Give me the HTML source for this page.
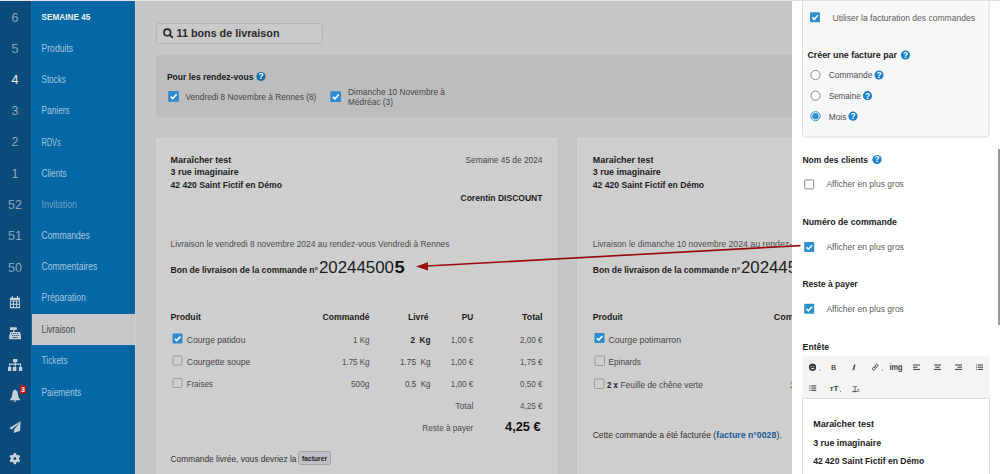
<!DOCTYPE html>
<html><head><meta charset="utf-8"><style>
html,body{margin:0;padding:0;width:1000px;height:474px;overflow:hidden;background:#c6c6c6}
svg{display:block;font-family:"Liberation Sans",sans-serif}
</style></head><body>
<svg width="1000" height="474" viewBox="0 0 1000 474">
<rect x="0" y="0" width="1000" height="474" fill="#c6c6c6" />
<rect x="0" y="0" width="31" height="474" fill="#0a4b7b" />
<rect x="31" y="0" width="104" height="474" fill="#0568a6" />
<rect x="129.5" y="0" width="5.5" height="474" fill="#0563a0" />
<rect x="31" y="314" width="104" height="31" fill="#c8c8c8" />
<rect x="135" y="0" width="1" height="474" fill="#cfcfcf" />
<rect x="31" y="0" width="1" height="474" fill="#0f6eaa" />
<rect x="0" y="0" width="792" height="1" fill="#e6e6e6" />
<text x="15.0" y="21.5" font-size="12.5" fill="#aebdcc" text-anchor="middle"  stroke="#0a4b7b" stroke-width="0.2">6</text>
<text x="15.0" y="52.5" font-size="12.5" fill="#aebdcc" text-anchor="middle"  stroke="#0a4b7b" stroke-width="0.2">5</text>
<text x="15.0" y="84" font-size="12.5" fill="#f4f6f8" text-anchor="middle" >4</text>
<text x="15.0" y="115" font-size="12.5" fill="#aebdcc" text-anchor="middle"  stroke="#0a4b7b" stroke-width="0.2">3</text>
<text x="15.0" y="146" font-size="12.5" fill="#aebdcc" text-anchor="middle"  stroke="#0a4b7b" stroke-width="0.2">2</text>
<text x="15.0" y="177.5" font-size="12.5" fill="#aebdcc" text-anchor="middle"  stroke="#0a4b7b" stroke-width="0.2">1</text>
<text x="15.0" y="209.2" font-size="12.5" fill="#aebdcc" text-anchor="middle"  stroke="#0a4b7b" stroke-width="0.2">52</text>
<text x="15.0" y="240.2" font-size="12.5" fill="#aebdcc" text-anchor="middle"  stroke="#0a4b7b" stroke-width="0.2">51</text>
<text x="15.0" y="271.5" font-size="12.5" fill="#aebdcc" text-anchor="middle"  stroke="#0a4b7b" stroke-width="0.2">50</text>
<text x="41.5" y="20.3" font-size="9" fill="#f0f0f0" font-weight="bold" textLength="48.8" lengthAdjust="spacingAndGlyphs" >SEMAINE 45</text>
<text x="41.5" y="52" font-size="10" fill="#a9c3dc" textLength="31.6" lengthAdjust="spacingAndGlyphs" >Produits</text>
<text x="41.5" y="82.9" font-size="10" fill="#a9c3dc" textLength="24.2" lengthAdjust="spacingAndGlyphs" >Stocks</text>
<text x="41.5" y="113.9" font-size="10" fill="#a9c3dc" textLength="28.2" lengthAdjust="spacingAndGlyphs" >Paniers</text>
<text x="41.5" y="145.6" font-size="10" fill="#a9c3dc" textLength="19.2" lengthAdjust="spacingAndGlyphs" >RDVs</text>
<text x="41.5" y="176.9" font-size="10" fill="#a9c3dc" textLength="25.2" lengthAdjust="spacingAndGlyphs" >Clients</text>
<text x="41.5" y="207.8" font-size="10" fill="#6f9cc4" textLength="35.5" lengthAdjust="spacingAndGlyphs" >Invitation</text>
<text x="41.5" y="239" font-size="10" fill="#a9c3dc" textLength="48.2" lengthAdjust="spacingAndGlyphs" >Commandes</text>
<text x="41.5" y="270.4" font-size="10" fill="#a9c3dc" textLength="55.7" lengthAdjust="spacingAndGlyphs" >Commentaires</text>
<text x="41.5" y="301.3" font-size="10" fill="#a9c3dc" textLength="44.2" lengthAdjust="spacingAndGlyphs" >Préparation</text>
<text x="41.5" y="333" font-size="10" fill="#3c4a55" textLength="33.7" lengthAdjust="spacingAndGlyphs" >Livraison</text>
<text x="41.5" y="364.2" font-size="10" fill="#a9c3dc" textLength="26.1" lengthAdjust="spacingAndGlyphs" >Tickets</text>
<text x="41.5" y="395.6" font-size="10" fill="#a9c3dc" textLength="39.7" lengthAdjust="spacingAndGlyphs" >Paiements</text>
<rect x="156.5" y="23.5" width="166" height="19.8" rx="2" fill="#c9c9c9" stroke="#b4b4b4"/>
<g fill="none" stroke="#222" stroke-width="1.6"><circle cx="167.3" cy="32.4" r="3.3"/><path d="M169.8 34.9 L172.8 37.9"/></g>
<text x="176.5" y="37.4" font-size="10.2" fill="#2a2a2a" font-weight="bold" textLength="103" lengthAdjust="spacingAndGlyphs" >11 bons de livraison</text>
<rect x="156" y="55" width="636" height="62" fill="#bdbdbd" />
<text x="166.9" y="79.5" font-size="9" fill="#1a1a1a" font-weight="bold" textLength="86.5" lengthAdjust="spacingAndGlyphs" >Pour les rendez-vous</text>
<circle cx="261" cy="76.5" r="4.6" fill="#1f6fa8"/><text x="261" y="79.4" font-size="8.28" font-weight="bold" fill="#fff" text-anchor="middle">?</text>
<rect x="168.2" y="91" width="10.7" height="10.7" rx="1" fill="#2f8ace"/>
<path d="M170.661 96.564 L172.694 98.597 L176.653 94.317" fill="none" stroke="#fff" stroke-width="1.6049999999999998"/>
<text x="185.4" y="100.3" font-size="9" fill="#474747" textLength="131" lengthAdjust="spacingAndGlyphs" >Vendredi 8 Novembre à Rennes (8)</text>
<rect x="330.3" y="91.2" width="10.7" height="10.7" rx="1" fill="#2f8ace"/>
<path d="M332.761 96.764 L334.794 98.797 L338.753 94.517" fill="none" stroke="#fff" stroke-width="1.6049999999999998"/>
<text x="348" y="95" font-size="9" fill="#474747" textLength="97" lengthAdjust="spacingAndGlyphs" >Dimanche 10 Novembre à</text>
<text x="348" y="105.3" font-size="9" fill="#474747" textLength="45" lengthAdjust="spacingAndGlyphs" >Médréac (3)</text>
<defs><filter id="sh" x="-5%" y="-5%" width="110%" height="110%"><feGaussianBlur stdDeviation="1.2"/></filter></defs>
<rect x="155.5" y="137.5" width="402" height="340" fill="#b8b8b8" filter="url(#sh)"/>
<rect x="156" y="138" width="401" height="340" fill="#cecece" stroke="#d2d2d2" stroke-width="1"/>
<rect x="577" y="137.5" width="300" height="340" fill="#b8b8b8" filter="url(#sh)"/>
<rect x="577.5" y="138" width="300" height="340" fill="#cecece" stroke="#d2d2d2" stroke-width="1"/>
<text x="170.6" y="163" font-size="9" fill="#1c1c1c" font-weight="bold" textLength="60.6" lengthAdjust="spacingAndGlyphs" >Maraîcher test</text>
<text x="170.6" y="175.3" font-size="9" fill="#1c1c1c" font-weight="bold" textLength="68" lengthAdjust="spacingAndGlyphs" >3 rue imaginaire</text>
<text x="170.6" y="187.8" font-size="9" fill="#1c1c1c" font-weight="bold" textLength="111.3" lengthAdjust="spacingAndGlyphs" >42 420 Saint Fictif en Démo</text>
<text x="592.8" y="163" font-size="9" fill="#1c1c1c" font-weight="bold" textLength="60.6" lengthAdjust="spacingAndGlyphs" >Maraîcher test</text>
<text x="592.8" y="175.3" font-size="9" fill="#1c1c1c" font-weight="bold" textLength="68" lengthAdjust="spacingAndGlyphs" >3 rue imaginaire</text>
<text x="592.8" y="187.8" font-size="9" fill="#1c1c1c" font-weight="bold" textLength="111.3" lengthAdjust="spacingAndGlyphs" >42 420 Saint Fictif en Démo</text>
<text x="542.5" y="163" font-size="9" fill="#474747" text-anchor="end" textLength="77" lengthAdjust="spacingAndGlyphs" >Semaine 45 de 2024</text>
<text x="542.5" y="200.5" font-size="9" fill="#1c1c1c" text-anchor="end" font-weight="bold" textLength="82" lengthAdjust="spacingAndGlyphs" >Corentin DISCOUNT</text>
<text x="170.5" y="246.8" font-size="9" fill="#4d4d4d" textLength="279" lengthAdjust="spacingAndGlyphs" >Livraison le vendredi 8 novembre 2024 au rendez-vous Vendredi à Rennes</text>
<text x="170.5" y="273" font-size="9" fill="#1c1c1c" font-weight="bold" textLength="147.5" lengthAdjust="spacingAndGlyphs" >Bon de livraison de la commande n°</text>
<text x="319" y="273" font-size="17" fill="#1c1c1c" textLength="75" lengthAdjust="spacingAndGlyphs" >20244500</text>
<text x="394.5" y="273" font-size="17" fill="#111" font-weight="bold" textLength="10.2" lengthAdjust="spacingAndGlyphs" >5</text>
<text x="592.7" y="246.8" font-size="9" fill="#4d4d4d" textLength="133.5" lengthAdjust="spacingAndGlyphs" >Livraison le dimanche 10 novembre</text>
<text x="728.5" y="246.8" font-size="9" fill="#4d4d4d" textLength="82" lengthAdjust="spacingAndGlyphs" >2024 au rendez-vous</text>
<text x="592.7" y="273" font-size="9" fill="#1c1c1c" font-weight="bold" textLength="147.5" lengthAdjust="spacingAndGlyphs" >Bon de livraison de la commande n°</text>
<text x="741" y="273" font-size="17" fill="#1c1c1c" textLength="56" lengthAdjust="spacingAndGlyphs" >202445</text>
<text x="170.5" y="320" font-size="9" fill="#1c1c1c" font-weight="bold" textLength="30.5" lengthAdjust="spacingAndGlyphs" >Produit</text>
<text x="369.5" y="320" font-size="9" fill="#1c1c1c" text-anchor="end" font-weight="bold" textLength="47" lengthAdjust="spacingAndGlyphs" >Commandé</text>
<text x="428.5" y="320" font-size="9" fill="#1c1c1c" text-anchor="end" font-weight="bold" textLength="20.5" lengthAdjust="spacingAndGlyphs" >Livré</text>
<text x="473.3" y="320" font-size="9" fill="#1c1c1c" text-anchor="end" font-weight="bold" textLength="11.5" lengthAdjust="spacingAndGlyphs" >PU</text>
<text x="542.5" y="320" font-size="9" fill="#1c1c1c" text-anchor="end" font-weight="bold" textLength="20.5" lengthAdjust="spacingAndGlyphs" >Total</text>
<rect x="172.5" y="333.5" width="10" height="10" rx="1" fill="#2f8ace"/>
<path d="M174.8 338.7 L176.7 340.6 L180.4 336.6" fill="none" stroke="#fff" stroke-width="1.5"/>
<text x="186.8" y="342.8" font-size="9" fill="#474747" textLength="58.6" lengthAdjust="spacingAndGlyphs" >Courge patidou</text>
<text x="369.5" y="342.8" font-size="9" fill="#4d4d4d" text-anchor="end" textLength="16.5" lengthAdjust="spacingAndGlyphs" >1 Kg</text>
<text x="430.5" y="342.8" font-size="9" fill="#1c1c1c" text-anchor="end" font-weight="bold" textLength="20" lengthAdjust="spacingAndGlyphs" xml:space="preserve">2  Kg</text>
<text x="473.3" y="342.8" font-size="9" fill="#4d4d4d" text-anchor="end" textLength="22.5" lengthAdjust="spacingAndGlyphs" >1,00 €</text>
<text x="542.5" y="342.8" font-size="9" fill="#4d4d4d" text-anchor="end" textLength="22.5" lengthAdjust="spacingAndGlyphs" >2,00 €</text>
<rect x="173.0" y="356.0" width="9" height="9" rx="1" fill="none" stroke="#9c9c9c"/>
<text x="186.8" y="364.8" font-size="9" fill="#474747" textLength="63.5" lengthAdjust="spacingAndGlyphs" >Courgette soupe</text>
<text x="369.5" y="364.8" font-size="9" fill="#4d4d4d" text-anchor="end" textLength="27.5" lengthAdjust="spacingAndGlyphs" >1.75 Kg</text>
<text x="430.5" y="364.8" font-size="9" fill="#444" text-anchor="end" textLength="30.5" lengthAdjust="spacingAndGlyphs" xml:space="preserve">1.75  Kg</text>
<text x="473.3" y="364.8" font-size="9" fill="#4d4d4d" text-anchor="end" textLength="22.5" lengthAdjust="spacingAndGlyphs" >1,00 €</text>
<text x="542.5" y="364.8" font-size="9" fill="#4d4d4d" text-anchor="end" textLength="22.5" lengthAdjust="spacingAndGlyphs" >1,75 €</text>
<rect x="173.0" y="378.5" width="9" height="9" rx="1" fill="none" stroke="#9c9c9c"/>
<text x="186.8" y="387.3" font-size="9" fill="#474747" textLength="26" lengthAdjust="spacingAndGlyphs" >Fraises</text>
<text x="369.5" y="387.3" font-size="9" fill="#4d4d4d" text-anchor="end" textLength="18.5" lengthAdjust="spacingAndGlyphs" >500g</text>
<text x="430.5" y="387.3" font-size="9" fill="#444" text-anchor="end" textLength="25.5" lengthAdjust="spacingAndGlyphs" xml:space="preserve">0.5  Kg</text>
<text x="473.3" y="387.3" font-size="9" fill="#4d4d4d" text-anchor="end" textLength="22.5" lengthAdjust="spacingAndGlyphs" >1,00 €</text>
<text x="542.5" y="387.3" font-size="9" fill="#4d4d4d" text-anchor="end" textLength="22.5" lengthAdjust="spacingAndGlyphs" >0,50 €</text>
<text x="473.3" y="409" font-size="9" fill="#4d4d4d" text-anchor="end" textLength="18" lengthAdjust="spacingAndGlyphs" >Total</text>
<text x="542.5" y="409" font-size="9" fill="#4d4d4d" text-anchor="end" textLength="22.5" lengthAdjust="spacingAndGlyphs" >4,25 €</text>
<text x="473.3" y="430.7" font-size="9" fill="#4d4d4d" text-anchor="end" textLength="51" lengthAdjust="spacingAndGlyphs" >Reste à payer</text>
<text x="540.7" y="431.2" font-size="13" fill="#111" text-anchor="end" font-weight="bold" textLength="35.7" lengthAdjust="spacingAndGlyphs" >4,25 €</text>
<text x="170.5" y="461.5" font-size="9" fill="#333" textLength="126" lengthAdjust="spacingAndGlyphs" >Commande livrée, vous devriez la</text>
<rect x="298.5" y="451.5" width="32" height="13" rx="2" fill="#c0bfc6" stroke="#a2a2a8"/>
<text x="314.5" y="461" font-size="7" fill="#222" text-anchor="middle" font-weight="bold" textLength="25" lengthAdjust="spacingAndGlyphs" >facturer</text>
<text x="592.7" y="319.6" font-size="9" fill="#1c1c1c" font-weight="bold" textLength="30" lengthAdjust="spacingAndGlyphs" >Produit</text>
<text x="773.7" y="319.6" font-size="9" fill="#1c1c1c" font-weight="bold" >Commandé</text>
<rect x="594.5" y="333" width="10" height="10" rx="1" fill="#2f8ace"/>
<path d="M596.8 338.2 L598.7 340.1 L602.4 336.1" fill="none" stroke="#fff" stroke-width="1.5"/>
<text x="608.5" y="342.7" font-size="9" fill="#474747" textLength="72.5" lengthAdjust="spacingAndGlyphs" >Courge potimarron</text>
<rect x="595.0" y="356.0" width="9.5" height="9.5" rx="1" fill="none" stroke="#9c9c9c"/>
<text x="608.5" y="365" font-size="9" fill="#474747" textLength="32.5" lengthAdjust="spacingAndGlyphs" >Epinards</text>
<rect x="594.5" y="379.0" width="9.5" height="9.5" rx="1" fill="none" stroke="#9c9c9c"/>
<text x="607" y="387.5" font-size="9" fill="#1c1c1c" font-weight="bold" textLength="11" lengthAdjust="spacingAndGlyphs" >2 x</text>
<text x="620.5" y="387.5" font-size="9" fill="#474747" textLength="82.3" lengthAdjust="spacingAndGlyphs" >Feuille de chêne verte</text>
<text x="789.8" y="387.5" font-size="9" fill="#4d4d4d" >1</text>
<text x="592.7" y="437.6" font-size="9" fill="#333" textLength="123.3" lengthAdjust="spacingAndGlyphs" >Cette commande a été facturée (</text>
<text x="716.3" y="437.6" font-size="9" fill="#175a94" font-weight="bold" textLength="60" lengthAdjust="spacingAndGlyphs" >facture n°0028</text>
<text x="776.6" y="437.6" font-size="9" fill="#333" >).</text>
<rect x="792" y="0" width="208" height="474" fill="#ffffff" />
<rect x="792" y="0" width="208" height="1" fill="#e0e0e0" />
<rect x="802.5" y="-10" width="186.5" height="147" rx="3" fill="#f8f8f8" stroke="#dcdcdc"/>
<rect x="792" y="0" width="208" height="1" fill="#e0e0e0" />
<rect x="810" y="12.2" width="10" height="10" rx="1" fill="#2d90d2"/>
<path d="M812.3 17.4 L814.2 19.299999999999997 L817.9 15.299999999999999" fill="none" stroke="#fff" stroke-width="1.5"/>
<text x="832.5" y="20.7" font-size="9" fill="#5c5c5c" textLength="142.5" lengthAdjust="spacingAndGlyphs" >Utiliser la facturation des commandes</text>
<text x="807.4" y="57.6" font-size="9" fill="#1c1c1c" font-weight="bold" textLength="89.6" lengthAdjust="spacingAndGlyphs" >Créer une facture par</text>
<circle cx="905.5" cy="55" r="4.6" fill="#1c83cf"/><text x="905.5" y="57.9" font-size="8.28" font-weight="bold" fill="#fff" text-anchor="middle">?</text>
<circle cx="815.5" cy="75" r="4.6" fill="#fff" stroke="#8a8a8a" stroke-width="1"/>
<text x="828.7" y="78.3" font-size="9" fill="#4d4d4d" textLength="43.7" lengthAdjust="spacingAndGlyphs" >Commande</text>
<circle cx="879" cy="75" r="4.6" fill="#1c83cf"/><text x="879" y="77.9" font-size="8.28" font-weight="bold" fill="#fff" text-anchor="middle">?</text>
<circle cx="815.5" cy="95.7" r="4.6" fill="#fff" stroke="#8a8a8a" stroke-width="1"/>
<text x="828.7" y="99.0" font-size="9" fill="#4d4d4d" textLength="32" lengthAdjust="spacingAndGlyphs" >Semaine</text>
<circle cx="867.5" cy="95.7" r="4.6" fill="#1c83cf"/><text x="867.5" y="98.60000000000001" font-size="8.28" font-weight="bold" fill="#fff" text-anchor="middle">?</text>
<circle cx="815.5" cy="116.2" r="4.6" fill="#fff" stroke="#2d90d2" stroke-width="1"/><circle cx="815.5" cy="116.2" r="3.2" fill="#2d90d2"/>
<text x="828.7" y="119.5" font-size="9" fill="#4d4d4d" textLength="17.7" lengthAdjust="spacingAndGlyphs" >Mois</text>
<circle cx="853" cy="116.2" r="4.6" fill="#1c83cf"/><text x="853" y="119.10000000000001" font-size="8.28" font-weight="bold" fill="#fff" text-anchor="middle">?</text>
<text x="802.4" y="162.7" font-size="9" fill="#1c1c1c" font-weight="bold" textLength="65.6" lengthAdjust="spacingAndGlyphs" >Nom des clients</text>
<circle cx="877" cy="159.5" r="4.6" fill="#1c83cf"/><text x="877" y="162.4" font-size="8.28" font-weight="bold" fill="#fff" text-anchor="middle">?</text>
<rect x="804.7" y="179.89999999999998" width="9" height="9" rx="1" fill="#fff" stroke="#8a8a8a"/>
<text x="826.4" y="187.2" font-size="9" fill="#5c5c5c" textLength="77.5" lengthAdjust="spacingAndGlyphs" >Afficher en plus gros</text>
<text x="802.4" y="225.4" font-size="9" fill="#1c1c1c" font-weight="bold" textLength="94.6" lengthAdjust="spacingAndGlyphs" >Numéro de commande</text>
<rect x="804.2" y="242.1" width="10" height="10" rx="1" fill="#2d90d2"/>
<path d="M806.5 247.29999999999998 L808.4000000000001 249.2 L812.1 245.2" fill="none" stroke="#fff" stroke-width="1.5"/>
<text x="826.4" y="249.9" font-size="9" fill="#5c5c5c" textLength="77.5" lengthAdjust="spacingAndGlyphs" >Afficher en plus gros</text>
<text x="802.4" y="287" font-size="9" fill="#1c1c1c" font-weight="bold" textLength="55.3" lengthAdjust="spacingAndGlyphs" >Reste à payer</text>
<rect x="804.2" y="303.7" width="10" height="10" rx="1" fill="#2d90d2"/>
<path d="M806.5 308.9 L808.4000000000001 310.8 L812.1 306.8" fill="none" stroke="#fff" stroke-width="1.5"/>
<text x="826.4" y="311.5" font-size="9" fill="#5c5c5c" textLength="77.5" lengthAdjust="spacingAndGlyphs" >Afficher en plus gros</text>
<rect x="998" y="149" width="2" height="176" fill="#9a9a9a" />
<text x="802.6" y="349.8" font-size="9" fill="#1c1c1c" font-weight="bold" textLength="26.5" lengthAdjust="spacingAndGlyphs" >Entête</text>
<rect x="802.5" y="356.5" width="187" height="42" fill="#f4f4f4"/>
<rect x="802.5" y="398.5" width="187" height="90" fill="#ffffff" stroke="#dddddd"/>
<text x="813.2" y="426.6" font-size="9" fill="#1c1c1c" font-weight="bold" textLength="60.8" lengthAdjust="spacingAndGlyphs" >Maraîcher test</text>
<text x="813.2" y="445.5" font-size="9" fill="#1c1c1c" font-weight="bold" textLength="68" lengthAdjust="spacingAndGlyphs" >3 rue imaginaire</text>
<text x="813.2" y="463.7" font-size="9" fill="#1c1c1c" font-weight="bold" textLength="111" lengthAdjust="spacingAndGlyphs" >42 420 Saint Fictif en Démo</text>
<circle cx="812.5" cy="367" r="3.6" fill="#444"/>
<text x="833.5" y="370" font-size="7" fill="#444" text-anchor="middle" >B</text>
<text x="854.3" y="370" font-size="7.5" fill="#444" text-anchor="middle" font-style="italic">I</text>
<text x="896" y="370" font-size="8" fill="#444" text-anchor="middle" textLength="12.5" lengthAdjust="spacingAndGlyphs" >img</text>
<g fill="#c9cfd6">
<rect x="11.8" y="295.8" width="1.1" height="2.6"/><rect x="17" y="295.8" width="1.1" height="2.6"/>
<path d="M9.9 297.8 H20 V308.2 H9.9 Z M10.9 301.6 V303.8 H13 V301.6 Z M14 301.6 V303.8 H16.1 V301.6 Z M17.1 301.6 V303.8 H19.1 V301.6 Z M10.9 304.8 V307 H13 V304.8 Z M14 304.8 V307 H16.1 V304.8 Z M17.1 304.8 V307 H19.1 V304.8 Z M9.9 300 V300.6 H20 V300 Z" fill-rule="evenodd"/>
<rect x="10" y="327.2" width="6.8" height="2.9" rx="0.5"/><rect x="13.2" y="330" width="1.2" height="2.2"/>
<path d="M10.2 332 H20 L21 336 V339.2 H9.2 V336 Z M11.2 333 v1 h1 v-1 z M13.2 333 v1 h1 v-1 z M15.2 333 v1 h1 v-1 z M17.2 333 v1 h1 v-1 z M12.2 335 v1 h1 v-1 z M14.2 335 v1 h1 v-1 z M16.2 335 v1 h1 v-1 z M18.2 335 v1 h1 v-1 z M12.5 337.2 v0.8 h5 v-0.8 z" fill-rule="evenodd"/>
<rect x="13" y="359" width="4.4" height="3.2"/><rect x="14.7" y="362" width="1" height="2"/><rect x="9.2" y="363.6" width="11.8" height="1.2"/>
<rect x="9.2" y="363.6" width="1" height="3.6"/><rect x="14.7" y="363.6" width="1" height="3.6"/><rect x="20.1" y="363.6" width="1" height="3.6"/>
<rect x="8" y="367" width="3.3" height="4"/><rect x="12.9" y="367" width="3.5" height="4"/><rect x="18.9" y="367" width="3.4" height="4"/>
<path d="M15.1 389.6 C13.2 390.2 12.4 392 12.2 394.5 C12 397 11.2 398.3 10 399.6 V400.2 H20.2 V399.6 C19 398.3 18.2 397 18 394.5 C17.8 392 17 390.2 15.1 389.6 Z"/><path d="M13.6 400.6 H16.3 C16.2 401.5 15.6 402 14.95 402 C14.3 402 13.7 401.5 13.6 400.6 Z"/>
<path d="M20.5 421.2 L9.4 428.1 L11.8 429.4 L19.8 422.6 Z"/><path d="M20.6 421.3 L20.1 430.7 L13.6 432.9 L14.3 429.6 Z"/>
<mask id="gm"><rect x="0" y="440" width="30" height="34" fill="#fff"/><circle cx="14.9" cy="458.6" r="1.35" fill="#000"/></mask>
<g mask="url(#gm)"><circle cx="14.9" cy="458.6" r="4.1"/><rect x="13.6" y="453" width="2.6" height="11.2" rx="0.8"/><rect x="13.6" y="453" width="2.6" height="11.2" rx="0.8" transform="rotate(60 14.9 458.6)"/><rect x="13.6" y="453" width="2.6" height="11.2" rx="0.8" transform="rotate(120 14.9 458.6)"/></g>
</g>
<rect x="19.9" y="385.3" width="5.9" height="8.6" rx="1.8" fill="#d40b0b"/>
<text x="22.85" y="392" font-size="7" fill="#fff" text-anchor="middle" font-weight="bold" >3</text>
<g fill="#3a3a3a">
<circle cx="812.6" cy="367.5" r="3.4"/>
<rect x="819.8" y="369.6" width="0.9" height="0.9"/><rect x="882" y="369.6" width="0.9" height="0.9"/><rect x="840" y="390.8" width="0.9" height="0.9"/>
</g>
<g fill="#f4f4f4"><circle cx="811.3" cy="366.6" r="0.55"/><circle cx="813.9" cy="366.6" r="0.55"/><rect x="811" y="368.3" width="3.2" height="0.9"/></g>
<text x="833.6" y="370.2" font-size="7.5" fill="#5c5c5c" text-anchor="middle" >B</text>
<path d="M854.7 364.4 L852.9 370.3" stroke="#3a3a3a" stroke-width="1"/>
<g fill="none" stroke="#3a3a3a" stroke-width="0.9"><rect x="875" y="364.6" width="3" height="2.4" rx="1" transform="rotate(-45 876.5 365.8)"/><rect x="872.4" y="367.4" width="3" height="2.4" rx="1" transform="rotate(-45 873.9 368.6)"/></g>
<text x="896" y="370.3" font-size="8.5" fill="#474747" text-anchor="middle" textLength="12.5" lengthAdjust="spacingAndGlyphs" >img</text>
<rect x="913" y="364.5" width="7" height="1" fill="#3a3a3a"/>
<rect x="913" y="366.7" width="4.5" height="1" fill="#3a3a3a"/>
<rect x="913" y="368.9" width="7" height="1" fill="#3a3a3a"/>
<rect x="934" y="364.5" width="7" height="1" fill="#3a3a3a"/>
<rect x="935.25" y="366.7" width="4.5" height="1" fill="#3a3a3a"/>
<rect x="934" y="368.9" width="7" height="1" fill="#3a3a3a"/>
<rect x="955" y="364.5" width="7" height="1" fill="#3a3a3a"/>
<rect x="957.5" y="366.7" width="4.5" height="1" fill="#3a3a3a"/>
<rect x="955" y="368.9" width="7" height="1" fill="#3a3a3a"/>
<rect x="976.2" y="364.5" width="1" height="1" fill="#3a3a3a"/><rect x="978.0" y="364.5" width="5" height="1" fill="#3a3a3a"/>
<rect x="976.2" y="366.7" width="1" height="1" fill="#3a3a3a"/><rect x="978.0" y="366.7" width="5" height="1" fill="#3a3a3a"/>
<rect x="976.2" y="368.9" width="1" height="1" fill="#3a3a3a"/><rect x="978.0" y="368.9" width="5" height="1" fill="#3a3a3a"/>
<rect x="809.4" y="385.4" width="1" height="1" fill="#3a3a3a"/><rect x="811.1999999999999" y="385.4" width="5" height="1" fill="#3a3a3a"/>
<rect x="809.4" y="387.59999999999997" width="1" height="1" fill="#3a3a3a"/><rect x="811.1999999999999" y="387.59999999999997" width="5" height="1" fill="#3a3a3a"/>
<rect x="809.4" y="389.79999999999995" width="1" height="1" fill="#3a3a3a"/><rect x="811.1999999999999" y="389.79999999999995" width="5" height="1" fill="#3a3a3a"/>
<text x="829.8" y="391" font-size="7.5" fill="#474747" font-weight="bold" >т</text>
<text x="833.5" y="391" font-size="8" fill="#474747" font-weight="bold" >T</text>
<text x="852.5" y="390.5" font-size="8" fill="#474747" >T</text>
<rect x="852.3" y="391.2" width="5" height="0.9" fill="#3a3a3a"/>
<text x="857" y="391.5" font-size="5" fill="#474747" >x</text>
<path d="M800.5 245.6 L427 266" stroke="#9a0c0c" stroke-width="1.6" fill="none"/>
<path d="M416 266.6 L428 262.2 L428 270.4 Z" fill="#9a0c0c"/>
</svg></body></html>
